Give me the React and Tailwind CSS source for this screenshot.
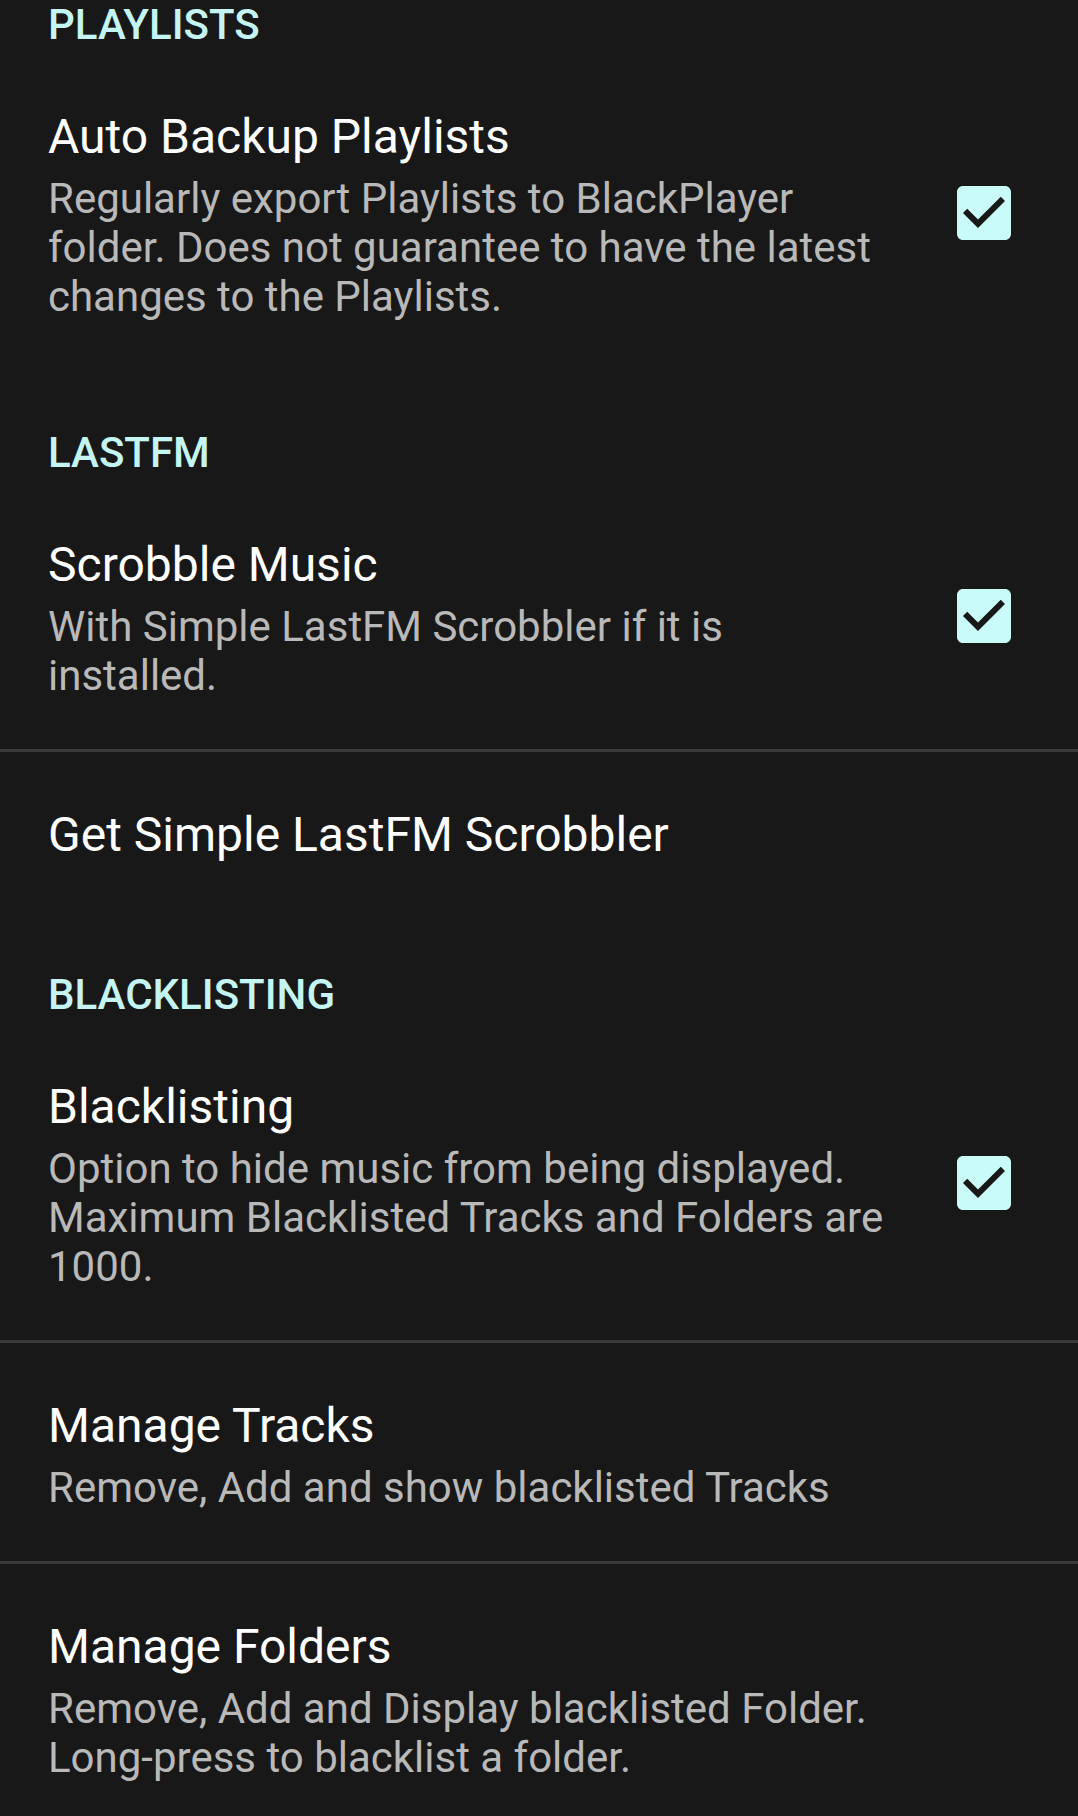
import React from 'react';

const sections = [
  {
    title: 'PLAYLISTS',
    items: [
      {
        title: 'Auto Backup Playlists',
        summary: [
          'Regularly export Playlists to BlackPlayer',
          'folder. Does not guarantee to have the latest',
          'changes to the Playlists.',
        ],
        checked: true,
      },
    ],
  },
  {
    title: 'LASTFM',
    items: [
      {
        title: 'Scrobble Music',
        summary: ['With Simple LastFM Scrobbler if it is', 'installed.'],
        checked: true,
      },
      { title: 'Get Simple LastFM Scrobbler' },
    ],
  },
  {
    title: 'BLACKLISTING',
    items: [
      {
        title: 'Blacklisting',
        summary: [
          'Option to hide music from being displayed.',
          'Maximum Blacklisted Tracks and Folders are',
          '1000.',
        ],
        checked: true,
      },
      { title: 'Manage Tracks', summary: ['Remove, Add and show blacklisted Tracks'] },
      {
        title: 'Manage Folders',
        summary: ['Remove, Add and Display blacklisted Folder.', 'Long-press to blacklist a folder.'],
      },
    ],
  },
];

function CheckBox() {
  return (
    <svg width="72" height="72" viewBox="0 0 24 24" className="shrink-0 mb-[5px]">
      <path
        fill="#c9fbf8"
        fillRule="evenodd"
        d="M19 3H5c-1.11 0-2 .9-2 2v14c0 1.1.89 2 2 2h14c1.11 0 2-.9 2-2V5c0-1.1-.89-2-2-2zm-9 14l-5-5 1.41-1.41L10 14.17l7.59-7.59L19 8l-9 9z"
      />
    </svg>
  );
}

function Preference({ item, first }) {
  return (
    <div className={`flex items-center pl-[48px] pr-[58px] ${first ? 'pt-0' : 'pt-[55px]'} pb-[49px]`}>
      <div className="flex-1 min-w-0 pr-[40px]">
        <div className="text-[48px] leading-[56px] text-white">{item.title}</div>
        {item.summary && (
          <div className="mt-[9px] text-[42px] leading-[49px] text-[#b9b9b9]">
            {item.summary.map((line) => (
              <div key={line} className="whitespace-nowrap">
                {line}
              </div>
            ))}
          </div>
        )}
      </div>
      {item.checked && <CheckBox />}
    </div>
  );
}

export default function App() {
  return (
    <div className="min-h-[1816px] w-[1078px] bg-[#181818] font-['Roboto',sans-serif] overflow-hidden">
      {sections.map((section, si) => (
        <div key={section.title}>
          <div
            className={`px-[48px] ${si === 0 ? 'pt-[1px]' : 'pt-[59px]'} pb-[60px] text-[42px] leading-[48px] font-medium text-[#c4f5f3]`}
          >
            {section.title}
          </div>
          {section.items.map((item, i) => (
            <div key={item.title}>
              {i > 0 && <div className="h-[3px] bg-[#393939]" />}
              <Preference item={item} first={i === 0} />
            </div>
          ))}
        </div>
      ))}
    </div>
  );
}
